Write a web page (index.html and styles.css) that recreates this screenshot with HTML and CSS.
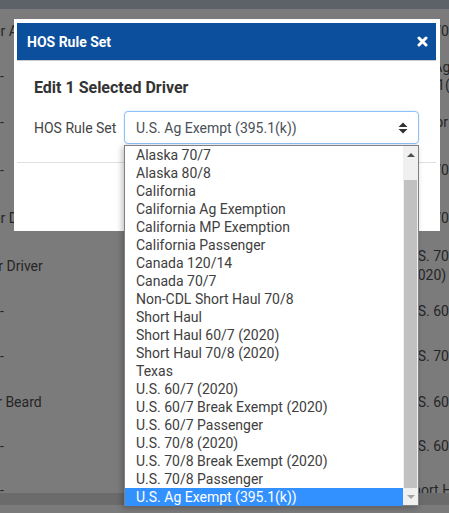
FILE: index.html
```html
<!DOCTYPE html>
<html lang="en">
<head>
<meta charset="utf-8">
<title>HOS Rule Set</title>
<link rel="stylesheet" href="styles.css">
</head>
<body>
<div class="page">
  <div class="topbar"></div>
  <div class="table">
    <div class="row h44"><div class="cell"><span class="name">Driver Adams</span></div><div class="cell">U.S. 70/8 (2020)</div></div>
    <div class="row h45"><div class="cell">-</div><div class="cell">U.S. Ag Exempt<br>(395.1(k))</div></div>
    <div class="row h48"><div class="cell">-</div><div class="cell">Harbor Short Haul</div></div>
    <div class="row h48"><div class="cell">-</div><div class="cell">U.S. 70/8 (2020)</div></div>
    <div class="row h48"><div class="cell"><span class="name">Driver Davis</span></div><div class="cell">U.S. 70/8 (2020)</div></div>
    <div class="row h47"><div class="cell"><span class="name">Other Driver</span></div><div class="cell two">U.S. 70/8<br>(2020)</div></div>
    <div class="row h44"><div class="cell">-</div><div class="cell">U.S. 60/7 (2020)</div></div>
    <div class="row h46"><div class="cell">-</div><div class="cell">U.S. 70/8 (2020)</div></div>
    <div class="row h45"><div class="cell"><span class="name">Peter Beard</span></div><div class="cell">U.S. 60/7 (2020)</div></div>
    <div class="row h44"><div class="cell">-</div><div class="cell">U.S. 60/7 (2020)</div></div>
    <div class="row last"><div class="cell">-</div><div class="cell">Short Haul</div></div>
  </div>
  <div class="hscroll"></div>

  <div class="modal">
    <div class="modal-header">
      <span class="modal-title">HOS Rule Set</span>
      <svg class="close" width="11" height="11" viewBox="0 0 11 11"><path d="M2 2 L9 9 M9 2 L2 9" stroke="#fff" stroke-width="3" stroke-linecap="round"/></svg>
    </div>
    <div class="modal-body">
      <h2 class="heading">Edit 1 Selected Driver</h2>
      <div class="form-row">
        <label class="label">HOS Rule Set</label>
        <div class="select-wrap">
          <div class="select">
            <span>U.S. Ag Exempt (395.1(k))</span>
            <svg class="caret" width="10" height="12" viewBox="0 0 10 12"><path d="M5 0.5 L9.5 5 L0.5 5 Z M0.5 7 L9.5 7 L5 11.5 Z" fill="#333"/></svg>
          </div>
          <div class="dropdown">
            <ul class="options">
              <li>Alaska 70/7</li>
              <li>Alaska 80/8</li>
              <li>California</li>
              <li>California Ag Exemption</li>
              <li>California MP Exemption</li>
              <li>California Passenger</li>
              <li>Canada 120/14</li>
              <li>Canada 70/7</li>
              <li>Non-CDL Short Haul 70/8</li>
              <li>Short Haul</li>
              <li>Short Haul 60/7 (2020)</li>
              <li>Short Haul 70/8 (2020)</li>
              <li>Texas</li>
              <li>U.S. 60/7 (2020)</li>
              <li>U.S. 60/7 Break Exempt (2020)</li>
              <li>U.S. 60/7 Passenger</li>
              <li>U.S. 70/8 (2020)</li>
              <li>U.S. 70/8 Break Exempt (2020)</li>
              <li>U.S. 70/8 Passenger</li>
              <li class="selected">U.S. Ag Exempt (395.1(k))</li>
            </ul>
            <div class="scrollbar">
              <div class="arrow up"></div>
              <div class="track"><div class="thumb"></div></div>
              <div class="arrow down"></div>
            </div>
          </div>
        </div>
      </div>
    </div>
    <div class="modal-footer"></div>
  </div>
</div>
</body>
</html>
```
FILE: styles.css
```css
html, body {
  margin: 0;
  padding: 0;
}
body {
  background: #7b7b7b;
  font-family: Roboto, "Liberation Sans", sans-serif;
  font-size: 14px;
  overflow: hidden;
}
.page {
  position: relative;
  width: 449px;
  height: 513px;
  overflow: hidden;
}
.topbar {
  height: 9px;
  background: #5d6268;
}
.table {
  color: #262626;
}
.row {
  display: grid;
  grid-template-columns: 405px 1fr;
  align-items: center;
  line-height: 18px;
  overflow: hidden;
}
.h44 { height: 44px; }
.h45 { height: 45px; }
.h46 { height: 46px; }
.h47 { height: 47px; }
.h48 { height: 48px; }
.row.last {
  height: 25px;
  align-items: start;
  padding-top: 13px;
  box-sizing: border-box;
}
.cell {
  white-space: nowrap;
}
.cell.two {
  line-height: 19px;
}
.name {
  margin-left: -31px;
}
.hscroll {
  height: 12px;
  background: #6b6b6b;
}

.modal {
  position: absolute;
  left: 14px;
  top: 19px;
  width: 426px;
  height: 212px;
  box-sizing: border-box;
  background: #fff;
  padding: 4px 4px 0 3px;
  display: flex;
  flex-direction: column;
}
.modal-header {
  height: 37px;
  background: #0c4f9c;
  border-bottom: 1px solid #c8ccd0;
  display: flex;
  align-items: center;
  justify-content: space-between;
  padding: 0 8px 0 10px;
}
.modal-title {
  color: #fff;
  font-weight: 700;
  font-size: 14px;
}
.close {
  display: block;
}
.modal-body {
  padding: 17px 0 18px 17px;
}
.heading {
  margin: 0 0 13px 0;
  font-size: 16px;
  line-height: 20px;
  font-weight: 700;
  color: #333;
}
.form-row {
  display: flex;
  align-items: center;
}
.label {
  width: 90px;
  color: #444;
  font-size: 14px;
}
.select-wrap {
  position: relative;
  width: 295px;
}
.select {
  height: 33px;
  box-sizing: border-box;
  border: 1px solid #8fc1f5;
  border-radius: 4px;
  display: flex;
  align-items: center;
  justify-content: space-between;
  padding: 0 10px 0 11px;
  color: #495057;
  box-shadow: 0 0 2px rgba(100, 160, 230, 0.35);
}
.caret {
  display: block;
}
.modal-footer {
  flex: 1;
  border-top: 1px solid #dcdfe3;
}

.dropdown {
  position: absolute;
  left: 0;
  top: 100%;
  margin-top: 1px;
  width: 295px;
  height: 361px;
  box-sizing: border-box;
  border: 1px solid #808080;
  background: #fff;
  display: flex;
  box-shadow: -2px 2px 6px rgba(0, 0, 0, 0.25);
}
.options {
  list-style: none;
  margin: 0;
  padding: 0;
  flex: 1;
}
.options li {
  height: 18px;
  line-height: 18px;
  padding-left: 11px;
  color: #404040;
  white-space: nowrap;
}
.options li.selected {
  background: #3390ff;
  color: #fff;
}
.scrollbar {
  width: 15px;
  background: #f0f0f0;
  display: flex;
  flex-direction: column;
}
.arrow {
  height: 17px;
  display: flex;
  align-items: center;
  justify-content: center;
}
.arrow::before {
  content: "";
  width: 0;
  height: 0;
  border-left: 4px solid transparent;
  border-right: 4px solid transparent;
}
.arrow.up::before {
  border-bottom: 4px solid #505050;
}
.arrow.down::before {
  border-top: 4px solid #a3a3a3;
}
.track {
  flex: 1;
  display: flex;
  flex-direction: column;
  justify-content: flex-end;
  padding: 0 1px;
}
.thumb {
  height: 308px;
  background: #c1c1c1;
}
```
